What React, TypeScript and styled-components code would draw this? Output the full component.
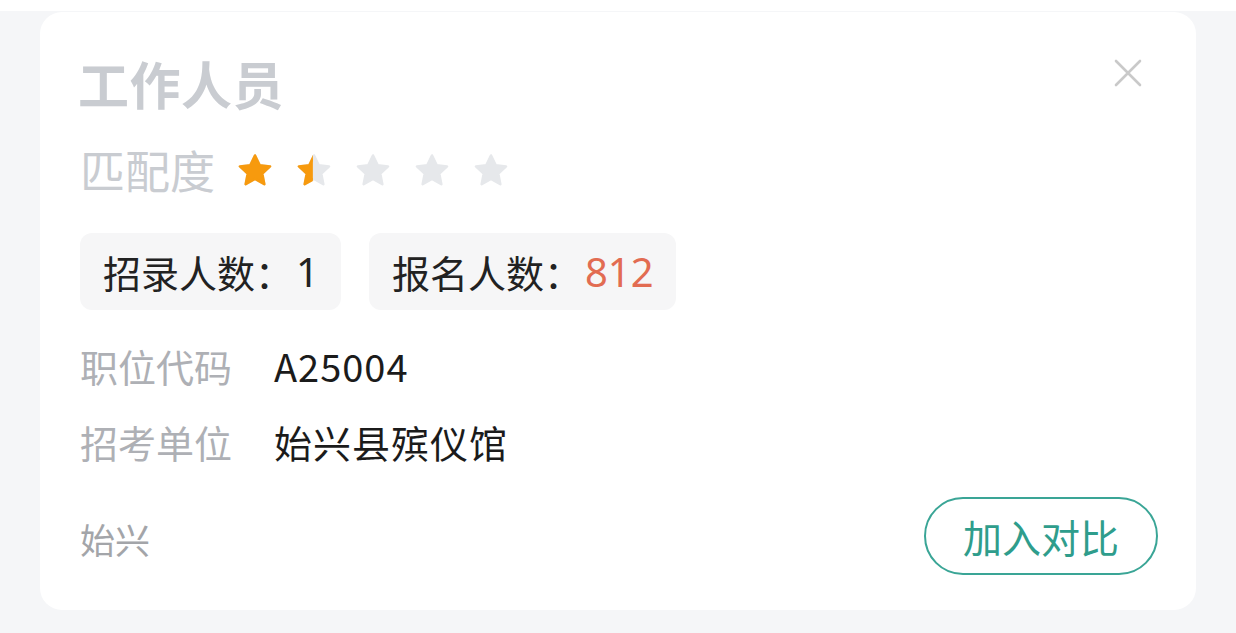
import React from 'react';
import styled, { createGlobalStyle } from 'styled-components';

const GlobalStyle = createGlobalStyle`
    html, body {
        margin: 0;
        padding: 0;
        background: #f5f6f8;
        font-family: "Noto Sans CJK SC", "Noto Sans", sans-serif;
    }
`

interface Tag {
    label: string
    value: string
    highlight?: boolean
}

interface Row {
    label: string
    value: string
}

const tags: Tag[] = [
    { label: '招录人数：', value: '1' },
    { label: '报名人数：', value: '812', highlight: true },
]

const rows: Row[] = [
    { label: '职位代码', value: 'A25004' },
    { label: '招考单位', value: '始兴县殡仪馆' },
]

const STAR = 'M12 2.2l2.9 6.1 6.6.8-4.9 4.6 1.3 6.6L12 17l-5.9 3.3 1.3-6.6-4.9-4.6 6.6-.8z'

const Star = ({ fill, idx }: { fill: number, idx: number }): any => {
    const id = `star-clip-${idx}`
    return (
        <svg width="38" height="38" viewBox="0 0 24 24">
            <defs>
                <clipPath id={id}>
                    <rect x="0" y="0" width={24 * fill} height="24" />
                </clipPath>
            </defs>
            <path d={STAR} fill="#e6e8eb" stroke="#e6e8eb" strokeWidth="1.6" strokeLinejoin="round" />
            {fill > 0 &&
                <path d={STAR} fill="#f79a0e" stroke="#f79a0e" strokeWidth="1.6" strokeLinejoin="round" clipPath={`url(#${id})`} />
            }
        </svg>
    )
}

const App = (): any => {
    const rating = [1, 0.47, 0, 0, 0]
    return (
        <Page>
            <GlobalStyle />
            <TopStrip />
            <Card>
                <Header>
                    <Title>工作人员</Title>
                    <Close>
                        <svg width="30" height="30" viewBox="0 0 30 30">
                            <path d="M3 3L27 27M27 3L3 27" stroke="#c9c9c9" strokeWidth="2.6" strokeLinecap="round" />
                        </svg>
                    </Close>
                </Header>
                <Match>
                    <MatchLabel>匹配度</MatchLabel>
                    <Stars>
                        {rating.map((r, i) => <Star key={i} idx={i} fill={r} />)}
                    </Stars>
                </Match>
                <Tags>
                    {tags.map(t => (
                        <TagBox key={t.label}>
                            {t.label}
                            <TagValue highlight={t.highlight}>{t.value}</TagValue>
                        </TagBox>
                    ))}
                </Tags>
                <Rows>
                    {rows.map(r => (
                        <InfoRow key={r.label}>
                            <InfoLabel>{r.label}</InfoLabel>
                            <InfoValue>{r.value}</InfoValue>
                        </InfoRow>
                    ))}
                </Rows>
                <Footer>
                    <Region>始兴</Region>
                    <CompareButton>加入对比</CompareButton>
                </Footer>
            </Card>
        </Page>
    );
}

const Page = styled.div`
    width: 1236px;
    height: 633px;
    display: flex;
    flex-direction: column;
    overflow: hidden;
`
const TopStrip = styled.div`
    height: 11px;
    background: #ffffff;
`
const Card = styled.div`
    margin: 1px 40px 0 40px;
    height: 598px;
    box-sizing: border-box;
    background: #ffffff;
    border-radius: 22px;
    padding: 45px 40px 0 40px;
    display: flex;
    flex-direction: column;
`
const Header = styled.div`
    display: flex;
    justify-content: space-between;
    align-items: flex-start;
`
const Title = styled.div`
    font-size: 51px;
    font-weight: 700;
    line-height: 52px;
    color: #c9ccd1;
    letter-spacing: 0.5px;
    margin-left: -2px;
`
const Close = styled.div`
    margin: 1px 13px 0 0;
    display: flex;
`
const Match = styled.div`
    display: flex;
    align-items: center;
    margin-top: 36px;
    height: 50px;
`
const MatchLabel = styled.div`
    font-size: 45px;
    color: #c9ccd1;
    line-height: 50px;
    margin-right: 21px;
`
const Stars = styled.div`
    display: flex;
    gap: 21px;
    margin-top: 2px;
`
const Tags = styled.div`
    display: flex;
    gap: 28px;
    margin-top: 38px;
`
const TagBox = styled.div`
    height: 77px;
    box-sizing: border-box;
    padding: 0 22px 0 23px;
    background: #f6f6f7;
    border-radius: 12px;
    display: flex;
    align-items: center;
    font-size: 38px;
    color: #222222;
`
const TagValue = styled.span<{ highlight?: boolean }>`
    color: ${(props): string => props.highlight ? '#e26c52' : '#222222'};
    font-family: "Noto Sans", sans-serif;
    font-size: 40px;
    margin-left: 3px;
`
const Rows = styled.div`
    display: flex;
    flex-direction: column;
    gap: 28px;
    margin-top: 31px;
`
const InfoRow = styled.div`
    display: flex;
    align-items: center;
    height: 48px;
`
const InfoLabel = styled.div`
    width: 194px;
    font-size: 38px;
    color: #aeb0b5;
`
const InfoValue = styled.div`
    font-size: 38px;
    color: #1b1b1b;
    letter-spacing: 1px;
`
const Footer = styled.div`
    display: flex;
    justify-content: space-between;
    align-items: center;
    margin-top: 32px;
`
const Region = styled.div`
    font-size: 35px;
    color: #a3a5a9;
    margin-top: 4px;
`
const CompareButton = styled.div`
    height: 78px;
    width: 234px;
    box-sizing: border-box;
    border: 2.5px solid #3aa596;
    border-radius: 40px;
    display: flex;
    align-items: center;
    justify-content: center;
    font-size: 39px;
    color: #2f9d8c;
    margin-right: -2px;
`

export default App;
